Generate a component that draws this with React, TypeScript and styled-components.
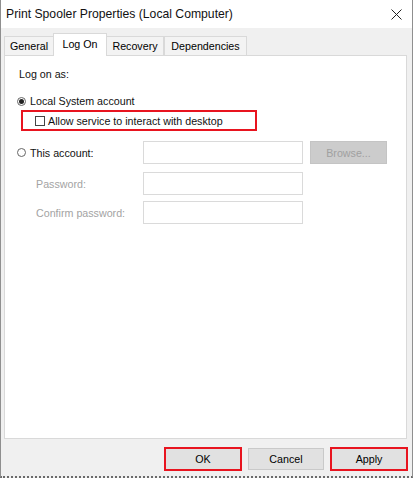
import React from "react";
import styled, { createGlobalStyle } from "styled-components";

const GlobalStyle = createGlobalStyle`
  html, body {
    margin: 0;
    padding: 0;
    background: #ffffff;
  }
  body {
    font-family: "Liberation Sans", Arial, sans-serif;
    font-size: 10.7px;
    color: #000;
  }
`;

const Window = styled.div`
  box-sizing: border-box;
  width: 413px;
  height: 478px;
  display: flex;
  flex-direction: column;
  border-left: 1px solid #8f8f8f;
  border-right: 1px solid #8f8f8f;
  border-bottom: 2px dotted #6a6a6a;
  background: #f0f0f0;
`;

const TitleBar = styled.div`
  height: 28px;
  flex: none;
  display: flex;
  align-items: center;
  justify-content: space-between;
  padding: 0 10px 0 5px;
  background: #ffffff;
`;

const Title = styled.span`
  font-size: 12.2px;
  color: #111;
`;

const CloseIcon = styled.svg`
  width: 11px;
  height: 11px;
  display: block;
`;

const Body = styled.div`
  flex: 1;
  display: flex;
  flex-direction: column;
  padding: 6px 5px 0 3px;
`;

const TabRow = styled.div`
  display: flex;
  align-items: flex-end;
  height: 22px;
  position: relative;
  z-index: 1;
  margin-bottom: -1px;
`;

const Tab = styled.div<{ $w: number; $active?: boolean }>`
  box-sizing: border-box;
  width: ${(p) => p.$w}px;
  height: ${(p) => (p.$active ? 23 : 20)}px;
  margin: ${(p) => (p.$active ? "0 -1px 0 -1px" : "0")};
  display: flex;
  align-items: center;
  justify-content: center;
  padding-bottom: ${(p) => (p.$active ? 3 : 1)}px;
  border: 1px solid #d9d9d9;
  border-bottom: ${(p) => (p.$active ? "none" : "1px solid #d9d9d9")};
  background: ${(p) => (p.$active ? "#ffffff" : "#f3f3f3")};
  font-size: 10.7px;
  color: #000;
`;

const Panel = styled.div`
  box-sizing: border-box;
  height: 384px;
  background: #ffffff;
  border: 1px solid #d9d9d9;
  padding: 11px 14px 0 14px;
  display: flex;
  flex-direction: column;
`;

const Text = styled.span<{ $muted?: boolean }>`
  font-size: 10.7px;
  line-height: 14px;
  color: ${(p) => (p.$muted ? "#a3a3a3" : "#111")};
  white-space: nowrap;
`;

const OptionRow = styled.div<{ $top: number }>`
  display: flex;
  align-items: center;
  gap: 4px;
  margin-top: ${(p) => p.$top}px;
  height: 14px;
`;

const Radio = styled.span<{ $checked?: boolean }>`
  box-sizing: border-box;
  width: 9px;
  height: 9px;
  margin-left: -2px;
  border-radius: 50%;
  border: 1px solid #666;
  background: #fff;
  display: flex;
  align-items: center;
  justify-content: center;
  flex: none;
  &::after {
    content: "";
    width: 5px;
    height: 5px;
    border-radius: 50%;
    background: ${(p) => (p.$checked ? "#222" : "transparent")};
  }
`;

const Highlight = styled.div`
  box-sizing: border-box;
  width: 236px;
  height: 21px;
  margin: 2px 0 0 2px;
  border: 2px solid #e8141f;
  display: flex;
  align-items: center;
  gap: 3px;
  padding-left: 12px;
`;

const Checkbox = styled.span`
  box-sizing: border-box;
  width: 10px;
  height: 10px;
  border: 1px solid #444;
  background: #fff;
  flex: none;
`;

const FieldRow = styled.div<{ $top: number }>`
  display: flex;
  align-items: center;
  height: 23px;
  margin-top: ${(p) => p.$top}px;
`;

const FieldLabel = styled.div<{ $indent?: number }>`
  width: 124px;
  flex: none;
  display: flex;
  align-items: center;
  gap: 4px;
  box-sizing: border-box;
  padding-left: ${(p) => p.$indent || 0}px;
`;

const Input = styled.div`
  box-sizing: border-box;
  width: 160px;
  height: 23px;
  background: #ffffff;
  border: 1px solid #dadada;
`;

const BrowseButton = styled.div`
  box-sizing: border-box;
  width: 77px;
  height: 23px;
  margin-left: 7px;
  background: #cccccc;
  border: 1px solid #c4c4c4;
  color: #a0a0a0;
  font-size: 10.7px;
  display: flex;
  align-items: center;
  justify-content: center;
`;

const Footer = styled.div`
  display: flex;
  justify-content: flex-end;
  align-items: center;
  gap: 6px;
  padding-top: 8px;
  margin-right: -1px;
`;

const Button = styled.div<{ $marked?: boolean }>`
  box-sizing: border-box;
  width: ${(p) => (p.$marked ? 78 : 76)}px;
  height: ${(p) => (p.$marked ? 24 : 22)}px;
  background: #e1e1e1;
  border: ${(p) => (p.$marked ? "2px solid #e8141f" : "1px solid #c9c9c9")};
  font-size: 10.7px;
  color: #000;
  display: flex;
  align-items: center;
  justify-content: center;
`;

const tabs = [
  { label: "General", w: 50 },
  { label: "Log On", w: 54 },
  { label: "Recovery", w: 58 },
  { label: "Dependencies", w: 83 },
];

export default function App() {
  return (
    <>
      <GlobalStyle />
      <Window>
        <TitleBar>
          <Title>Print Spooler Properties (Local Computer)</Title>
          <CloseIcon viewBox="0 0 11 11">
            <path d="M0.5 0.5 L10.5 10.5 M10.5 0.5 L0.5 10.5" stroke="#222" strokeWidth="1" fill="none" />
          </CloseIcon>
        </TitleBar>
        <Body>
          <TabRow>
            {tabs.map((t) => (
              <Tab key={t.label} $w={t.w} $active={t.label === "Log On"}>
                {t.label}
              </Tab>
            ))}
          </TabRow>
          <Panel>
            <Text>Log on as:</Text>
            <OptionRow $top={13}>
              <Radio $checked />
              <Text>Local System account</Text>
            </OptionRow>
            <Highlight>
              <Checkbox />
              <Text>Allow service to interact with desktop</Text>
            </Highlight>
            <FieldRow $top={10}>
              <FieldLabel>
                <Radio />
                <Text>This account:</Text>
              </FieldLabel>
              <Input />
              <BrowseButton>Browse...</BrowseButton>
            </FieldRow>
            <FieldRow $top={8}>
              <FieldLabel $indent={17}>
                <Text $muted>Password:</Text>
              </FieldLabel>
              <Input />
            </FieldRow>
            <FieldRow $top={6}>
              <FieldLabel $indent={17}>
                <Text $muted>Confirm password:</Text>
              </FieldLabel>
              <Input />
            </FieldRow>
          </Panel>
          <Footer>
            <Button $marked>OK</Button>
            <Button>Cancel</Button>
            <Button $marked>Apply</Button>
          </Footer>
        </Body>
      </Window>
    </>
  );
}
